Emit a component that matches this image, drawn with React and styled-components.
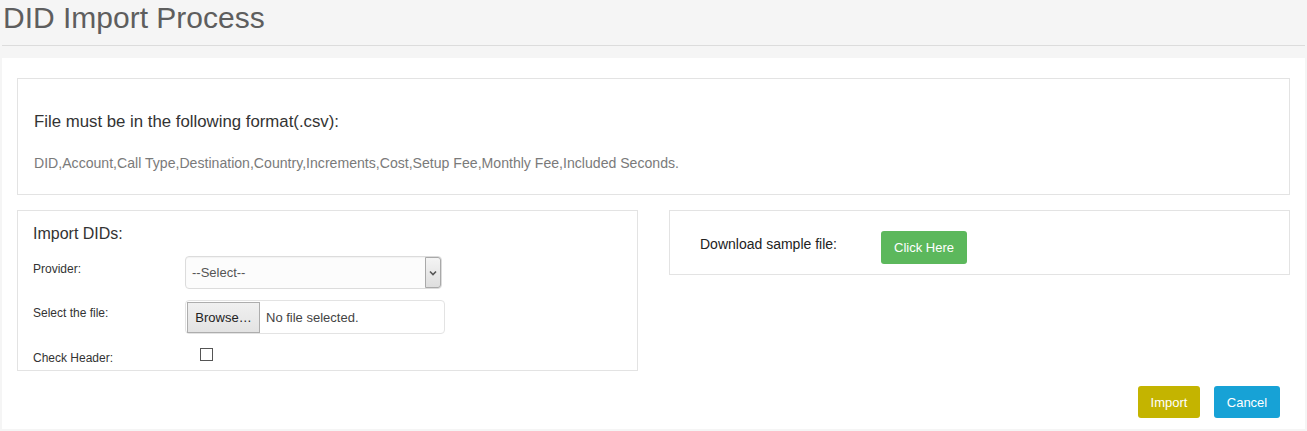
import React from "react";
import styled, { createGlobalStyle } from "styled-components";

const Global = createGlobalStyle`
  html, body { margin: 0; padding: 0; background: #f5f5f5; }
  body { font-family: "Liberation Sans", Arial, sans-serif; color: #333; }
  * { box-sizing: border-box; }
`;

const Page = styled.div`
  width: 1307px;
  height: 431px;
  padding: 0 2px;
  overflow: hidden;
`;

const Title = styled.h1`
  margin: 0;
  padding: 3px 0 0 1px;
  height: 46px;
  font-size: 30px;
  line-height: 30px;
  font-weight: normal;
  color: #5e5e5e;
  border-bottom: 1px solid #dcdcdc;
`;

const Panel = styled.div`
  margin-top: 12px;
  background: #fff;
  height: 371px;
  padding: 20px 15px 0;
`;

const Box = styled.div`
  border: 1px solid #e3e3e3;
  background: #fff;
`;

const FormatBox = styled(Box)`
  height: 117px;
  padding: 33px 16px 0;
`;

const FormatTitle = styled.div`
  font-size: 16.8px;
  line-height: 20px;
  color: #333;
`;

const FormatText = styled.div`
  margin-top: 22px;
  font-size: 14.1px;
  line-height: 18px;
  color: #7a7a7a;
`;

const Columns = styled.div`
  display: grid;
  grid-template-columns: 621px 621px;
  column-gap: 31px;
  margin-top: 15px;
  align-items: start;
`;

const ImportBox = styled(Box)`
  height: 161px;
  padding: 13px 15px 0;
`;

const SectionTitle = styled.div`
  font-size: 16px;
  line-height: 20px;
  color: #333;
  margin-bottom: 12px;
`;

const Row = styled.div`
  display: grid;
  grid-template-columns: 152px auto;
  align-items: start;
  margin-bottom: ${(p) => p.$mb ?? 11}px;
`;

const Label = styled.label`
  font-size: 12px;
  line-height: 16px;
  color: #333;
  padding-top: ${(p) => p.$pt ?? 5}px;
`;

const SelectBox = styled.div`
  position: relative;
  width: 257px;
  height: 33px;
  border: 1px solid #dcdcdc;
  border-radius: 4px;
  background: #fcfcfc;
  box-shadow: inset 0 1px 1px rgba(0,0,0,0.04);
  font-size: 13px;
  color: #555;
  line-height: 31px;
  padding-left: 6px;
`;

const SelectArrow = styled.div`
  position: absolute;
  right: 0;
  top: 0;
  bottom: 0;
  width: 16px;
  border: 1px solid #a9a9a9;
  border-radius: 0 3px 3px 0;
  background: linear-gradient(#f4f4f4, #dedede);
  display: flex;
  align-items: center;
  justify-content: center;
`;

const FileBox = styled.div`
  display: flex;
  align-items: center;
  width: 260px;
  height: 34px;
  border: 1px solid #e3e3e3;
  border-radius: 4px;
  background: #fff;
  padding: 1px;
  font-size: 13px;
  color: #444;
`;

const BrowseBtn = styled.div`
  width: 73px;
  height: 31px;
  border: 1px solid #adadad;
  background: linear-gradient(#f0f0f0, #e3e3e3);
  color: #222;
  display: flex;
  align-items: center;
  justify-content: center;
  margin-right: 6px;
`;

const Check = styled.span`
  display: block;
  width: 13px;
  height: 13px;
  border: 1px solid #555;
  background: #fff;
  margin-left: 15px;
  margin-top: 1px;
`;

const SampleBox = styled(Box)`
  height: 65px;
  display: flex;
  align-items: flex-start;
  padding: 20px 0 0 30px;
`;

const SampleLabel = styled.span`
  font-size: 14px;
  line-height: 16px;
  color: #222;
  width: 181px;
  margin-top: 5px;
`;

const Btn = styled.button`
  font-family: "Liberation Sans", Arial, sans-serif;
  border: none;
  border-radius: 3px;
  color: #fff;
  font-size: 13px;
  height: ${(p) => p.$h || 32}px;
  width: ${(p) => p.$w}px;
  background: ${(p) => p.$bg};
  padding: 0;
  cursor: pointer;
`;

const Actions = styled.div`
  display: flex;
  justify-content: flex-end;
  gap: 14px;
  margin-top: 15px;
  padding-right: 10px;
`;

export default function App() {
  return (
    <>
      <Global />
      <Page>
        <Title>DID Import Process</Title>
        <Panel>
          <FormatBox>
            <FormatTitle>File must be in the following format(.csv):</FormatTitle>
            <FormatText>
              DID,Account,Call Type,Destination,Country,Increments,Cost,Setup Fee,Monthly Fee,Included Seconds.
            </FormatText>
          </FormatBox>
          <Columns>
            <ImportBox>
              <SectionTitle>Import DIDs:</SectionTitle>
              <Row>
                <Label>Provider:</Label>
                <SelectBox>
                  --Select--
                  <SelectArrow>
                    <svg width="8" height="6" viewBox="0 0 8 6">
                      <path d="M1 1.5 L4 4.5 L7 1.5" fill="none" stroke="#555" strokeWidth="1.6" />
                    </svg>
                  </SelectArrow>
                </SelectBox>
              </Row>
              <Row $mb={13}>
                <Label>Select the file:</Label>
                <FileBox>
                  <BrowseBtn>Browse…</BrowseBtn>
                  No file selected.
                </FileBox>
              </Row>
              <Row $mb={0}>
                <Label $pt={3}>Check Header:</Label>
                <Check />
              </Row>
            </ImportBox>
            <SampleBox>
              <SampleLabel>Download sample file:</SampleLabel>
              <Btn $bg="#5cb85c" $w={86} $h={33}>Click Here</Btn>
            </SampleBox>
          </Columns>
          <Actions>
            <Btn $bg="#c4b400" $w={62}>Import</Btn>
            <Btn $bg="#17a2d6" $w={66}>Cancel</Btn>
          </Actions>
        </Panel>
      </Page>
    </>
  );
}
